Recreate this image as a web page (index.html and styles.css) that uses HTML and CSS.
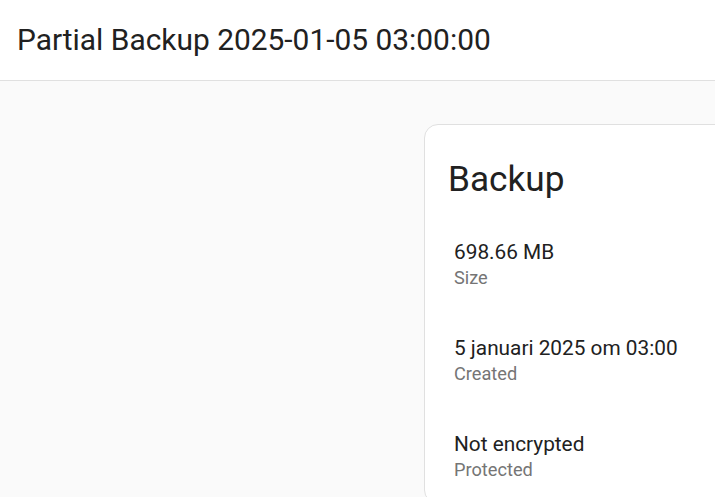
FILE: index.html
```html
<!DOCTYPE html>
<html>
<head>
<meta charset="utf-8">
<link rel="stylesheet" href="styles.css">
</head>
<body>
<header class="toolbar">
  <h1 class="toolbar-title">Partial Backup 2025-01-05 03:00:00</h1>
</header>
<main class="content">
  <section class="card">
    <h2 class="card-title">Backup</h2>
    <div class="items">
      <div class="item">
        <div class="item-value">698.66 MB</div>
        <div class="item-label">Size</div>
      </div>
      <div class="item">
        <div class="item-value">5 januari 2025 om 03:00</div>
        <div class="item-label">Created</div>
      </div>
      <div class="item">
        <div class="item-value">Not encrypted</div>
        <div class="item-label">Protected</div>
      </div>
    </div>
  </section>
</main>
</body>
</html>
```
FILE: styles.css
```css
html, body {
  margin: 0;
  padding: 0;
  height: 100%;
  overflow: hidden;
}
body {
  font-family: Roboto, "Noto Sans", sans-serif;
  background: #fafafa;
  color: #212121;
}
.toolbar {
  height: 80px;
  background: #ffffff;
  border-bottom: 1px solid #e0e0e0;
  display: flex;
  align-items: center;
  padding: 0 17px;
}
.toolbar-title {
  margin: 0;
  font-size: 29.9px;
  font-weight: 400;
  line-height: 1;
}
.content {
  padding: 43px 0 0 424px;
}
.card {
  width: 420px;
  box-sizing: border-box;
  background: #ffffff;
  border: 1px solid #e0e0e0;
  border-radius: 14px;
  padding: 30px 0 0 23px;
  min-height: 380px;
}
.card-title {
  margin: 0;
  font-size: 35.2px;
  font-weight: 400;
  line-height: 48px;
}
.items {
  display: flex;
  flex-direction: column;
  gap: 44px;
  padding: 35px 0 0 6px;
}
.item-value {
  font-size: 20.8px;
  line-height: 28px;
  color: #212121;
}
.item-label {
  font-size: 18.2px;
  line-height: 24px;
  color: #757575;
}
```
